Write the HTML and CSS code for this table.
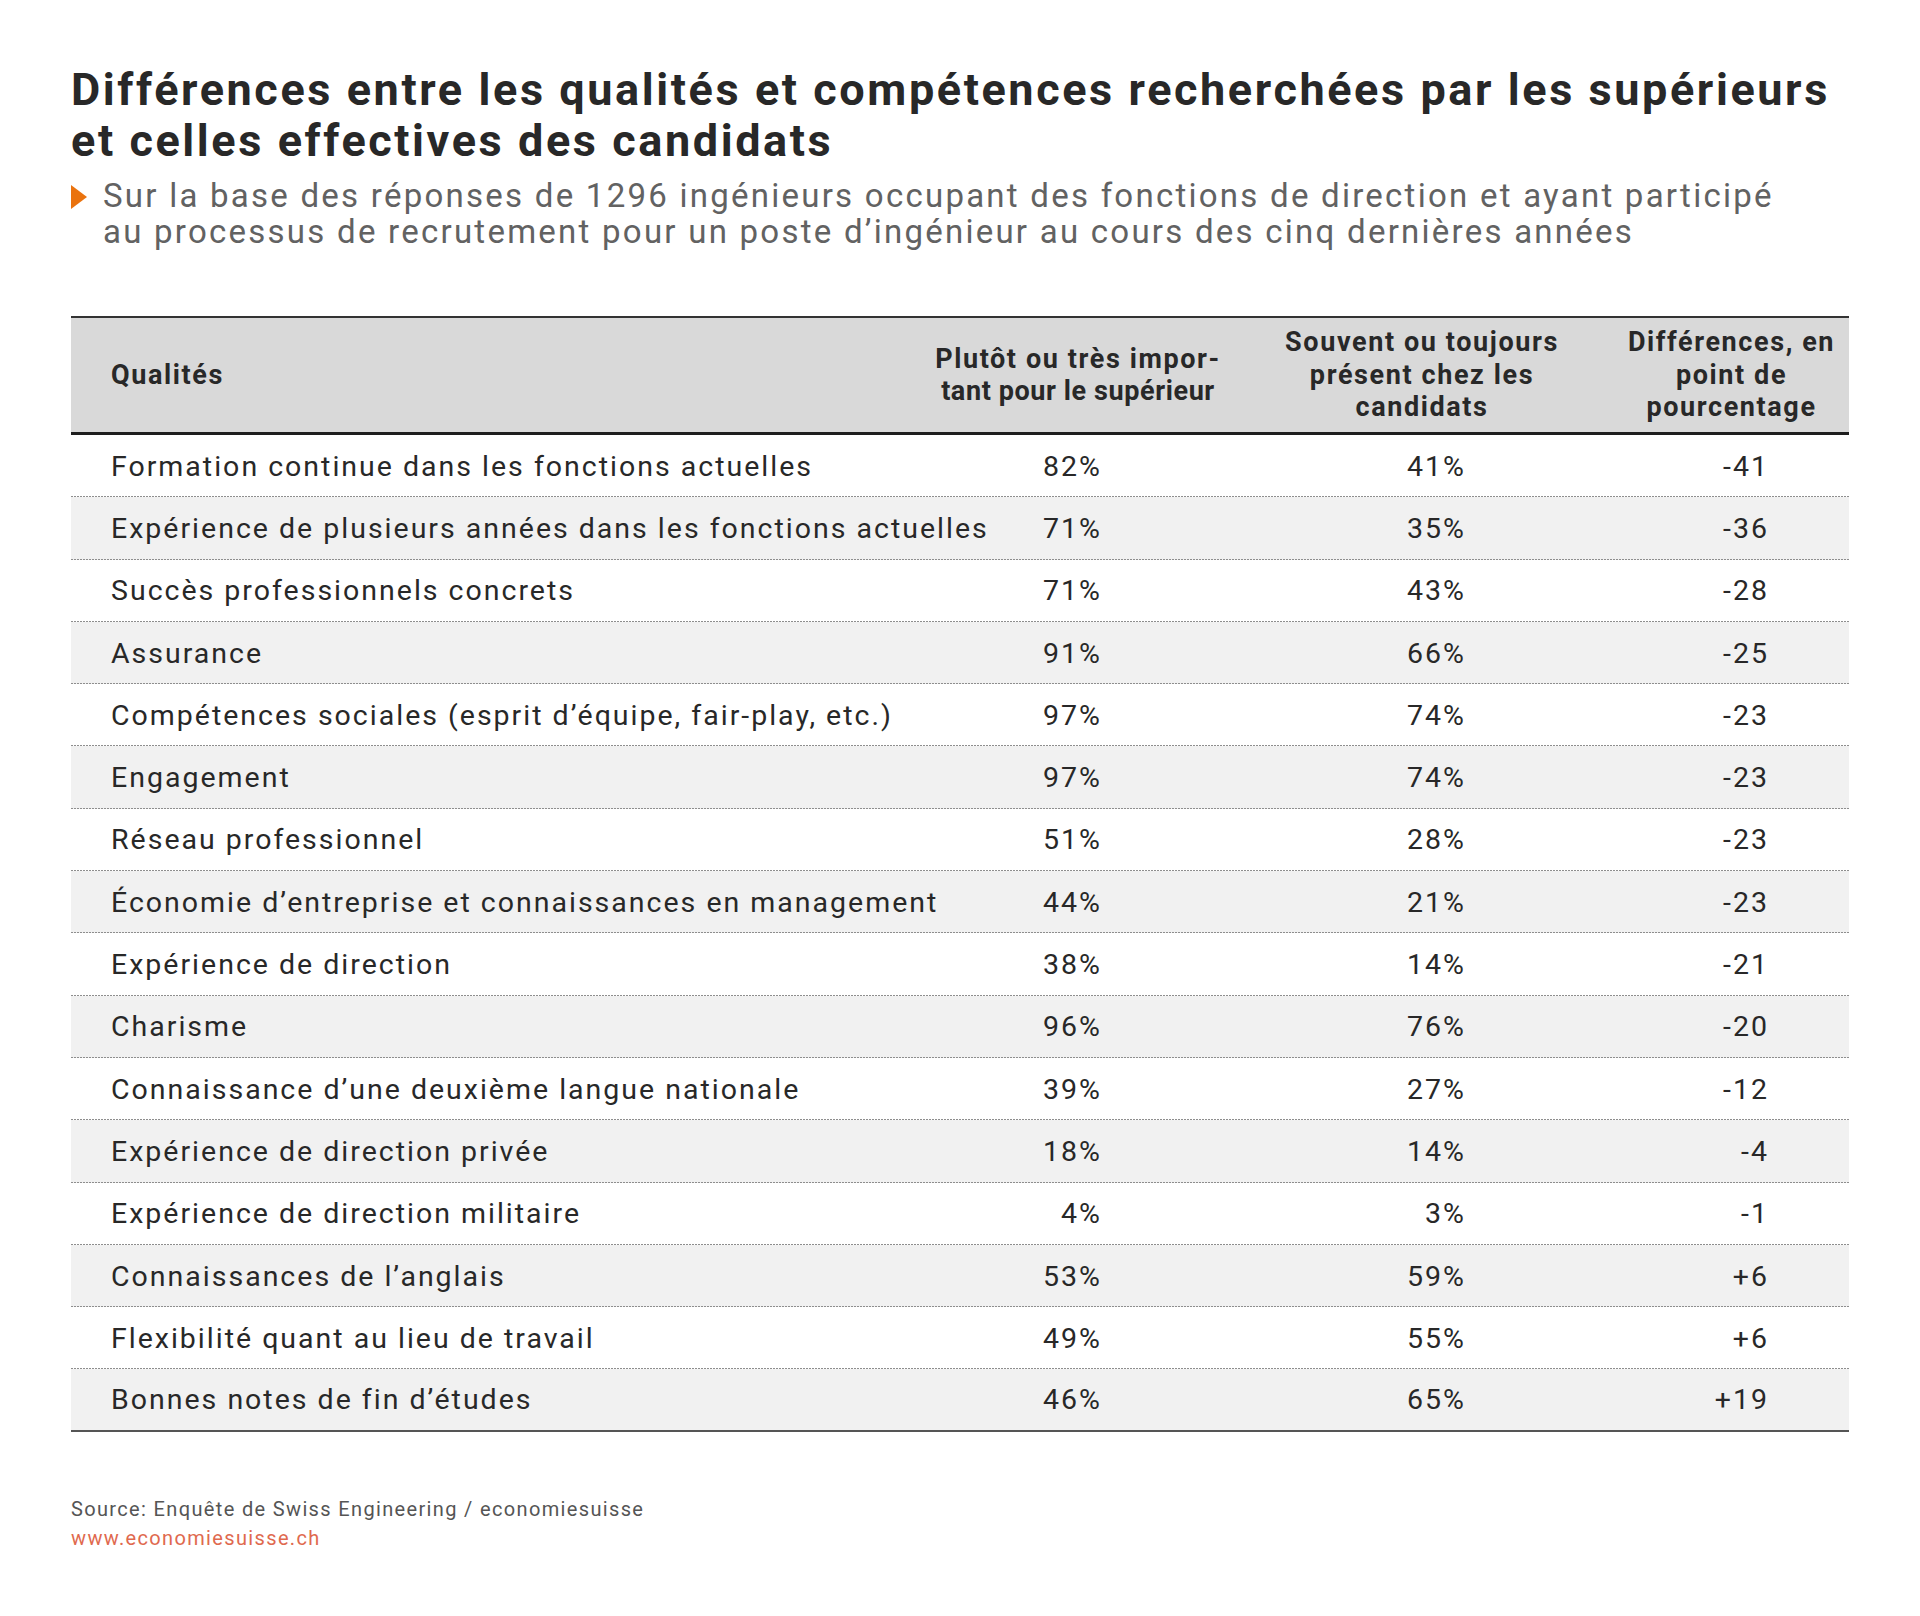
FILE: index.html
```html
<!DOCTYPE html>
<html lang="fr">
<head>
<meta charset="utf-8">
<title>Différences entre les qualités et compétences</title>
<link rel="stylesheet" href="styles.css">
</head>
<body>
<div class="page">
  <h1 class="title">Différences entre les qualités et compétences recherchées par les supérieurs<br>et celles effectives des candidats</h1>
  <div class="subtitle">
    <span class="tri"></span>
    <p>Sur la base des réponses de 1296 ingénieurs occupant des fonctions de direction et ayant participé<br>au processus de recrutement pour un poste d’ingénieur au cours des cinq dernières années</p>
  </div>

  <div class="table">
    <div class="thead">
      <div class="th th-label">Qualités</div>
      <div class="th th-c1"><span class="l1">Plutôt ou très impor-</span><br><span class="l2">tant pour le supérieur</span></div>
      <div class="th th-c2">Souvent ou toujours<br>présent chez les<br>candidats</div>
      <div class="th th-c3">Différences, en<br>point de<br>pourcentage</div>
    </div>
    <div class="row"><div class="label">Formation continue dans les fonctions actuelles</div><div class="n1">82%</div><div class="n2">41%</div><div class="n3">-41</div></div>
    <div class="row"><div class="label">Expérience de plusieurs années dans les fonctions actuelles</div><div class="n1">71%</div><div class="n2">35%</div><div class="n3">-36</div></div>
    <div class="row"><div class="label">Succès professionnels concrets</div><div class="n1">71%</div><div class="n2">43%</div><div class="n3">-28</div></div>
    <div class="row"><div class="label">Assurance</div><div class="n1">91%</div><div class="n2">66%</div><div class="n3">-25</div></div>
    <div class="row"><div class="label">Compétences sociales (esprit d’équipe, fair-play, etc.)</div><div class="n1">97%</div><div class="n2">74%</div><div class="n3">-23</div></div>
    <div class="row"><div class="label">Engagement</div><div class="n1">97%</div><div class="n2">74%</div><div class="n3">-23</div></div>
    <div class="row"><div class="label">Réseau professionnel</div><div class="n1">51%</div><div class="n2">28%</div><div class="n3">-23</div></div>
    <div class="row"><div class="label">Économie d’entreprise et connaissances en management</div><div class="n1">44%</div><div class="n2">21%</div><div class="n3">-23</div></div>
    <div class="row"><div class="label">Expérience de direction</div><div class="n1">38%</div><div class="n2">14%</div><div class="n3">-21</div></div>
    <div class="row"><div class="label">Charisme</div><div class="n1">96%</div><div class="n2">76%</div><div class="n3">-20</div></div>
    <div class="row"><div class="label">Connaissance d’une deuxième langue nationale</div><div class="n1">39%</div><div class="n2">27%</div><div class="n3">-12</div></div>
    <div class="row"><div class="label">Expérience de direction privée</div><div class="n1">18%</div><div class="n2">14%</div><div class="n3">-4</div></div>
    <div class="row"><div class="label">Expérience de direction militaire</div><div class="n1">4%</div><div class="n2">3%</div><div class="n3">-1</div></div>
    <div class="row"><div class="label">Connaissances de l’anglais</div><div class="n1">53%</div><div class="n2">59%</div><div class="n3">+6</div></div>
    <div class="row"><div class="label">Flexibilité quant au lieu de travail</div><div class="n1">49%</div><div class="n2">55%</div><div class="n3">+6</div></div>
    <div class="row"><div class="label">Bonnes notes de fin d’études</div><div class="n1">46%</div><div class="n2">65%</div><div class="n3">+19</div></div>
  </div>

  <div class="source">
    <p>Source: Enquête de Swiss Engineering / economiesuisse</p>
    <p class="link">www.economiesuisse.ch</p>
  </div>
</div>
</body>
</html>
```
FILE: styles.css
```css
html, body {
  margin: 0;
  padding: 0;
  background: #ffffff;
}

.page {
  width: 1778px;
  padding: 64px 71px 0 71px;
  font-family: Roboto, "Liberation Sans", sans-serif;
  color: #282828;
}

.title {
  margin: 0;
  font-size: 45px;
  line-height: 51px;
  font-weight: 700;
  letter-spacing: 2.58px;
  color: #282828;
  white-space: nowrap;
}

.subtitle {
  display: flex;
  align-items: flex-start;
  gap: 16px;
  margin-top: 12px;
}

.tri {
  flex: none;
  width: 0;
  height: 0;
  margin-top: 7px;
  border-top: 12px solid transparent;
  border-bottom: 12px solid transparent;
  border-left: 16px solid #ea730e;
}

.subtitle p {
  margin: 0;
  font-size: 33px;
  line-height: 36px;
  letter-spacing: 2.25px;
  color: #626262;
  white-space: nowrap;
}

.table {
  margin-top: 66px;
  display: flex;
  flex-direction: column;
}

.thead,
.row {
  display: grid;
  grid-template-columns: 829px 350px 344px 255px;
  align-items: center;
}

.thead {
  height: 119px;
  box-sizing: border-box;
  background: #d9d9d9;
  border-top: 2px solid #333333;
  border-bottom: 3px solid #1e1e1e;
}

.th {
  font-weight: 700;
  font-size: 27px;
  line-height: 32.5px;
  letter-spacing: 1.6px;
  color: #282828;
}

.th-label {
  padding-left: 40px;
}

.th-c1 {
  text-align: center;
  padding-left: 6px;
}

.th-c1 .l2 {
  letter-spacing: 0.6px;
}

.th-c2 {
  text-align: center;
}

.th-c3 {
  text-align: center;
  padding-left: 20px;
}

.row {
  height: 62.3px;
  box-sizing: border-box;
  font-size: 28.5px;
  letter-spacing: 2px;
  color: #282828;
  background:
    repeating-linear-gradient(to right, #8e8e8e 0 2px, transparent 2px 3px) left bottom / 100% 1px no-repeat,
    #ffffff;
}

.row:nth-child(odd) {
  background:
    repeating-linear-gradient(to right, #8e8e8e 0 2px, transparent 2px 3px) left bottom / 100% 1px no-repeat,
    #f1f1f1;
}

.row:last-child {
  background: #f1f1f1;
  border-bottom: 2px solid #555555;
}

.label {
  padding-left: 40px;
  white-space: nowrap;
}

.n1,
.n2,
.n3 {
  text-align: right;
}

.n1 { padding-right: 148px; }
.n2 { padding-right: 128px; }
.n3 { padding-right: 80px; }

.source {
  margin-top: 63px;
  font-size: 20px;
  line-height: 29px;
  letter-spacing: 1.35px;
  color: #555555;
}

.source p {
  margin: 0;
}

.source .link {
  color: #e0694e;
}
```
